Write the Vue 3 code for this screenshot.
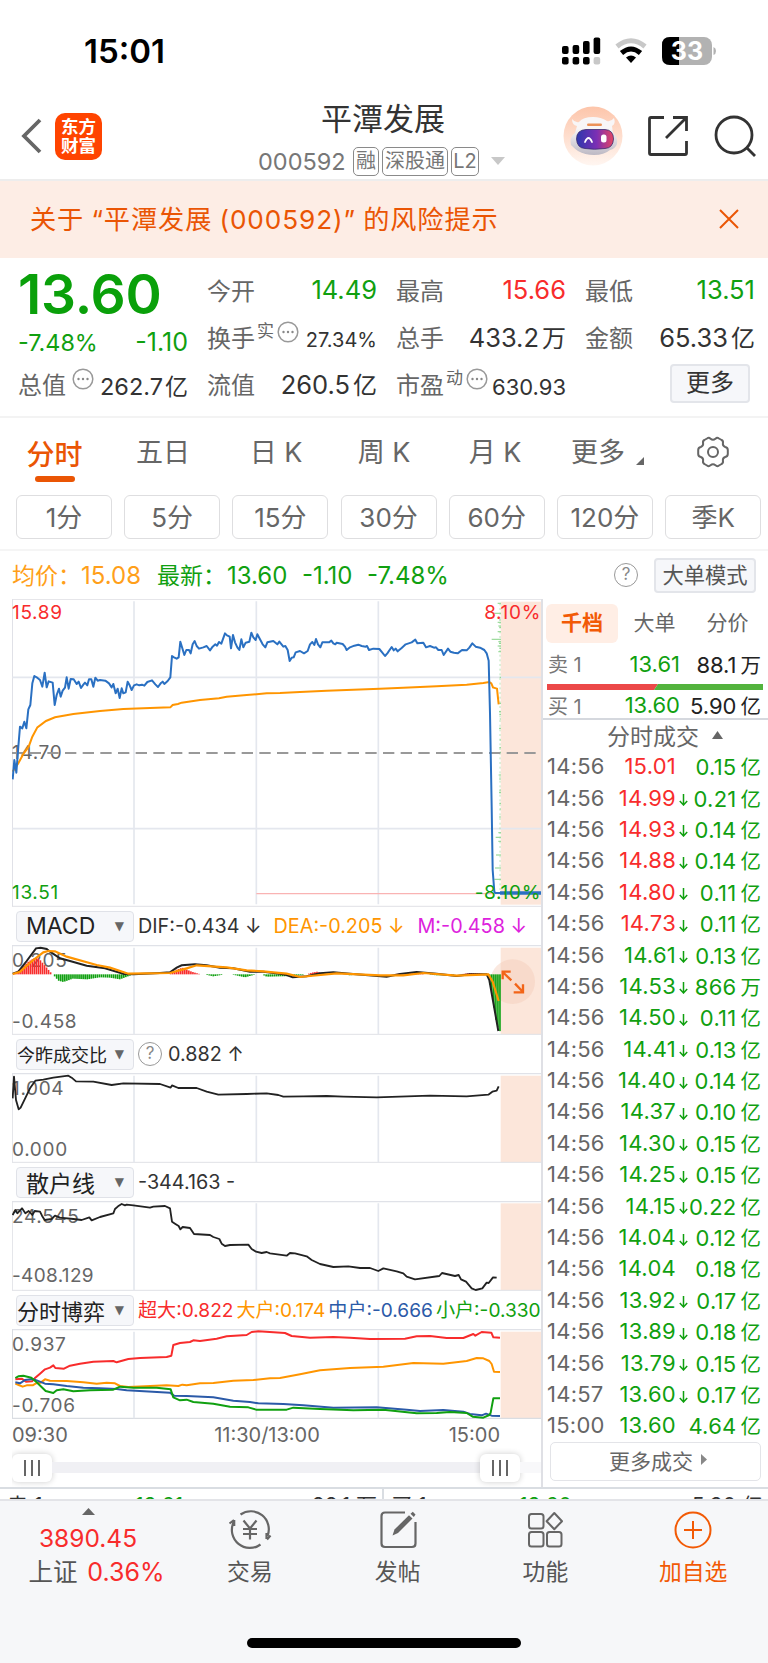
<script setup>
const stats = [
  { label: '今开', value: '14.49', tone: 'down' },
  { label: '最高', value: '15.66', tone: 'up' },
  { label: '最低', value: '13.51', tone: 'down' },
]

const tabs = ['五日', '日 K', '周 K', '月 K']
const periods = ['1分', '5分', '15分', '30分', '60分', '120分', '季K']

const trades = [
  ['14:56', '15.01', '', '0.15', '亿'],
  ['14:56', '14.99', '↓', '0.21', '亿'],
  ['14:56', '14.93', '↓', '0.14', '亿'],
  ['14:56', '14.88', '↓', '0.14', '亿'],
  ['14:56', '14.80', '↓', '0.11', '亿'],
  ['14:56', '14.73', '↓', '0.11', '亿'],
  ['14:56', '14.61', '↓', '0.13', '亿'],
  ['14:56', '14.53', '↓', '866', '万'],
  ['14:56', '14.50', '↓', '0.11', '亿'],
  ['14:56', '14.41', '↓', '0.13', '亿'],
  ['14:56', '14.40', '↓', '0.14', '亿'],
  ['14:56', '14.37', '↓', '0.10', '亿'],
  ['14:56', '14.30', '↓', '0.15', '亿'],
  ['14:56', '14.25', '↓', '0.15', '亿'],
  ['14:56', '14.15', '↓', '0.22', '亿'],
  ['14:56', '14.04', '↓', '0.12', '亿'],
  ['14:56', '14.04', '', '0.18', '亿'],
  ['14:56', '13.92', '↓', '0.17', '亿'],
  ['14:56', '13.89', '↓', '0.18', '亿'],
  ['14:56', '13.79', '↓', '0.15', '亿'],
  ['14:57', '13.60', '↓', '0.17', '亿'],
  ['15:00', '13.60', '', '4.64', '亿'],
]
const PREV_CLOSE = 14.7

const price =
  '38,568 43,510 49,548 55,470 60,410 67,415 73,395 79,415 85,358 91,345 97,280 103,258 110,262 120,270 127,290 134,248 140,292 146,274 158,278 164,345 170,315 177,296 182,320 188,302 195,293 200,262 206,296 212,267 221,268 230,282 236,275 243,294 250,284 255,278 262,286 267,268 274,268 280,290 286,263 293,272 300,270 316,272 327,280 335,292 340,282 347,310 353,296 359,324 365,295 370,310 377,307 383,275 389,286 395,300 402,286 410,283 418,286 426,284 433,287 442,276 456,271 466,283 474,291 482,280 488,275 493,282 503,273 511,262 516,198 522,202 530,206 536,202 541,155 547,175 553,195 559,180 567,180 572,190 578,163 584,153 590,168 597,176 610,172 620,168 630,181 638,170 646,163 651,167 657,156 664,161 675,130 681,136 689,140 693,175 699,135 705,157 712,172 718,180 724,148 730,172 737,158 748,155 754,128 760,142 767,150 772,133 780,148 788,163 796,172 802,157 820,153 832,163 838,155 850,170 856,168 863,180 869,213 875,203 881,202 887,187 900,183 912,190 923,183 930,163 937,156 943,165 948,147 954,163 961,172 967,157 987,157 994,152 1000,160 1006,163 1010,158 1028,162 1035,170 1040,180 1050,172 1063,167 1075,164 1085,168 1097,170 1101,168 1107,180 1120,176 1138,177 1147,188 1155,198 1162,190 1175,171 1181,181 1187,176 1193,184 1205,174 1217,163 1235,157 1246,149 1252,160 1270,158 1278,172 1290,168 1302,173 1308,172 1315,180 1325,180 1331,195 1344,176 1351,185 1362,188 1373,190 1386,180 1400,181 1408,173 1417,160 1427,170 1440,173 1453,180 1460,190 1466,212 1470,370 1475,650 1478,840 1483,905 1486,909 1500,909'
const average =
  '38,545 55,520 70,492 86,470 97,440 112,412 138,393 165,382 220,372 300,363 370,357 430,355 511,352 518,345 534,342 545,338 600,330 657,325 680,320 740,315 800,310 840,309 900,306 980,302 1140,296 1210,293 1310,289 1400,284 1450,279 1468,276 1474,280 1479,292 1491,296 1496,343'
const ticks = [
  [40, 10], [70, 24], [90, 6], [97, 10], [108, 8], [112, 5], [125, 10], [148, 28], [155, 8], [160, 6],
  [168, 10], [175, 5], [185, 8], [262, 4], [340, 5], [365, 6], [373, 5], [387, 4], [415, 6], [450, 4], [473, 5],
  [487, 4], [555, 7], [567, 6], [600, 5], [608, 6], [640, 5], [657, 4], [681, 6], [728, 8], [742, 16],
  [754, 8], [795, 15], [834, 18], [868, 20],
]

const dif =
  '38,206 55,200 80,168 108,130 122,128 140,132 150,140 180,160 210,168 260,182 315,190 372,207 400,208 480,204 510,202 530,188 545,181 585,178 620,181 660,188 700,190 750,200 790,200 840,206 860,210 878,217 920,214 960,205 1000,202 1050,206 1160,215 1200,207 1250,201 1310,206 1370,213 1410,208 1460,208 1468,225 1495,378'
const dea =
  '38,207 60,200 100,165 130,142 145,138 165,139 200,155 290,180 330,188 385,206 440,205 510,204 560,190 590,181 680,187 740,196 790,199 820,202 860,206 900,216 930,213 1010,205 1140,211 1210,211 1270,204 1370,212 1465,208 1478,230 1496,288'
const macdKnots = [
  [40, 0], [60, 15], [85, 38], [108, 52], [118, 46], [140, 20], [157, 0], [163, -5], [175, -19], [190, -23],
  [205, -18], [218, -13], [262, -15], [300, -9], [330, -10], [360, -15], [400, 0], [508, 0], [530, 14],
  [547, 20], [575, 8], [602, 0], [612, 0], [640, -6], [676, 0], [694, 0], [735, -9], [768, 0], [785, 0],
  [800, -7], [840, -6], [885, -5], [920, 0], [935, 5], [952, 8], [975, 0], [1030, 0], [1050, -3], [1080, 0],
  [1170, 0], [1210, 3], [1250, 3], [1280, 0], [1310, -3], [1350, -2], [1380, 0], [1410, 4], [1440, 3], [1456, 0],
  [1464, -8], [1474, -50], [1484, -115], [1491, -155], [1502, -174],
]
function heightAt(x) {
  const i = macdKnots.findIndex((k) => k[0] >= x)
  if (i <= 0) return 0
  const [x0, y0] = macdKnots[i - 1]
  const [x1, y1] = macdKnots[i]
  return y0 + ((x - x0) / (x1 - x0)) * (y1 - y0)
}
const macdBars = []
for (let x = 42; x <= 1500; x += 6.1) {
  const h = heightAt(x)
  if (Math.abs(h) > 1) macdBars.push({ x, y: h > 0 ? 208 - h : 208, h: Math.abs(h), fill: h > 0 ? '#f82c2c' : '#10a010' })
}

const ratio =
  '38,580 42,515 48,585 56,613 62,608 90,550 106,527 130,524 160,518 205,512 215,518 228,529 280,530 335,540 370,535 480,537 512,548 516,541 535,549 590,549 620,560 655,569 740,567 800,565 835,570 850,575 910,574 980,573 1030,575 1130,577 1290,572 1400,574 1465,569 1477,560 1490,557 1496,544'
const retail =
  '38,150 46,135 52,145 66,130 76,145 86,138 97,150 104,138 120,140 126,152 134,165 155,162 165,152 180,158 220,162 245,165 268,157 275,166 300,156 340,145 345,132 354,124 365,117 375,121 380,119 400,121 450,128 460,125 495,123 510,130 516,170 525,176 536,183 541,193 548,186 570,189 582,207 630,210 640,216 658,222 665,236 675,243 690,240 745,239 755,252 768,260 785,264 800,261 810,265 860,272 870,264 885,265 920,274 935,285 960,297 1000,306 1045,304 1080,309 1110,309 1135,318 1150,310 1190,319 1210,325 1220,335 1245,343 1318,333 1326,324 1365,333 1376,330 1383,343 1398,350 1415,370 1427,375 1447,370 1460,353 1466,354 1479,337 1490,338'
const flows = [
  { color: '#ff9500', points: '46,656 56,660 68,665 80,661 98,661 108,655 122,653 135,643 150,647 200,648 250,652 290,656 320,653 345,655 360,663 385,666 500,661 535,663 547,659 560,661 600,655 640,654 700,647 760,645 810,640 840,639 900,628 960,616 1050,609 1150,605 1240,594 1330,596 1400,588 1430,579 1450,580 1468,588 1475,597 1482,620 1500,621' },
  { color: '#f82c2c', points: '46,643 65,641 78,650 96,649 104,640 120,626 135,613 150,608 160,601 166,609 192,611 210,602 240,596 280,590 340,588 350,592 385,582 420,579 500,576 514,572 520,540 540,534 570,531 580,526 600,528 650,521 680,514 740,510 755,501 775,499 855,504 875,513 930,518 1000,516 1050,518 1110,522 1215,521 1250,514 1290,513 1340,519 1390,519 1420,507 1426,512 1445,501 1474,503 1480,517 1500,518' },
  { color: '#2b5aa8', points: '46,652 60,655 75,645 98,642 110,646 135,656 160,658 200,663 250,668 300,670 350,672 380,676 510,683 522,692 560,693 640,697 700,707 750,711 775,715 850,717 910,721 1000,728 1130,727 1220,734 1260,738 1330,735 1390,740 1410,747 1445,751 1458,746 1475,752 1500,753' },
  { color: '#10a010', points: '46,639 55,634 70,632 94,638 110,652 137,678 160,684 170,676 190,673 220,679 270,676 340,674 360,665 400,668 470,668 512,673 520,697 540,706 560,704 580,711 640,716 690,725 745,727 768,734 860,734 880,728 960,732 1060,736 1150,734 1250,745 1310,744 1350,741 1400,744 1418,755 1450,758 1468,750 1472,743 1480,700 1500,700' },
]
</script>

<template>
  <div class="page">
    <div class="status">
      <div class="clock">15:01</div>
      <svg class="status-icons" width="160" height="44" viewBox="556 31 160 44">
        <g fill="#000">
          <rect x="562" y="46" width="6.6" height="8" rx="2" />
          <rect x="572.6" y="45" width="6.6" height="9" rx="2" />
          <rect x="583" y="41" width="6.6" height="13" rx="2" />
          <rect x="593.6" y="37.500" width="6.600" height="16.500" rx="2" />
          <rect x="562" y="57" width="6.600" height="7.500" rx="2" />
          <rect x="572.600" y="57" width="6.600" height="7.500" rx="2" />
          <rect x="583" y="57" width="6.600" height="7.500" rx="2" />
        </g>
        <rect x="593.600" y="57" width="6.600" height="7.500" rx="2" fill="#c8c8c8" />
        <path d="M617 46.500 Q631 35 645 46.500" fill="none" stroke="#c8c8c8" stroke-width="5" />
        <path d="M621.500 53 Q631 45 640.500 53" fill="none" stroke="#000" stroke-width="5" />
        <path d="M626 57.500 Q631 53.500 636 57.500 L631 63 Z" />
        <rect x="662" y="37" width="50" height="28" rx="8" fill="#b2b2b2" />
        <path d="M670 37 H679 V65 H670 Q662 65 662 57 V45 Q662 37 670 37 Z" />
        <path d="M713.500 47 Q716 48 716 51 T713.500 55 Z" fill="#b2b2b2" />
        <text x="687" y="60" class="battery">33</text>
      </svg>
    </div>

    <header class="header">
      <div class="head-left">
        <svg width="22" height="36" viewBox="0 0 22 36"><path d="M20 2 L4 18 L20 34" fill="none" stroke="#666" stroke-width="3.800" /></svg>
        <div class="logo"><span>东方</span><span>财富</span></div>
      </div>
      <div class="head-mid">
        <div class="title">平潭发展</div>
        <div class="subtitle">
          <span class="code">000592</span>
          <span class="tag w1">融</span><span class="tag w3">深股通</span><span class="tag w2">L2</span>
          <svg class="drop" width="14" height="8" viewBox="0 0 14 8"><path d="M0 0H14L7 8Z" fill="#c8c8c8" /></svg>
        </div>
      </div>
      <div class="head-right">
        <svg width="60" height="60" viewBox="0 0 60 60">
          <defs>
            <linearGradient id="halo" x1="0" y1="0" x2="0" y2="1"><stop offset="0" stop-color="#fdc5aa" /><stop offset="1" stop-color="#fff6f1" /></linearGradient>
            <linearGradient id="visor" x1="0" y1="0" x2="1" y2="0"><stop offset="0" stop-color="#2e38ad" /><stop offset=".55" stop-color="#7c2fb4" /><stop offset="1" stop-color="#e64662" /></linearGradient>
            <linearGradient id="shell" x1="0" y1="0" x2="0" y2="1"><stop offset=".3" stop-color="#f8f6f7" /><stop offset="1" stop-color="#bdb9c4" /></linearGradient>
          </defs>
          <circle cx="30" cy="30" r="29.500" fill="url(#halo)" />
          <path d="M9 13 Q9 19 14 20 L12 27 Q6 31 8 39 Q12 43 15 45 Q22 49 31 49 Q41 49 47 44 Q52 43 54 38 Q55 31 50 27 L49 20 Q53 18 51 12 Q48 16 44 15 Q38 11 30 11 Q20 11 16 16 Q12 17 9 13Z" fill="url(#shell)" />
          <path d="M13.500 33Q13.500 24 23 23.500H42Q50.500 24 50.500 33Q50 42 42 42.500Q31 44 22 42.500Q14 42 13.500 33Z" fill="url(#visor)" stroke="#3b2c6e" stroke-width=".8" />
          <path d="M22 36 Q25.500 28 29 36" fill="none" stroke="#fff" stroke-width="1.800" stroke-linecap="round" />
          <rect x="38" y="28.500" width="5.500" height="8" rx="2.500" fill="#fff" />
          <rect x="24" y="17.500" width="15" height="2.500" rx="1.200" fill="#ec9258" />
        </svg>
        <svg width="42" height="42" viewBox="0 0 42 42" fill="none" stroke="#333" stroke-width="2.800">
          <path d="M17 2.500H4Q2.500 2.500 2.500 4V38Q2.500 39.500 4 39.500H38Q39.500 39.500 39.500 38V26M19 23L39 3M26 2.500H39.500V16" />
        </svg>
        <svg width="42" height="42" viewBox="0 0 42 42" fill="none" stroke="#333" stroke-width="2.800"><circle cx="20" cy="20" r="18" /><path d="M32.500 32.500L41 41" /></svg>
      </div>
    </header>

    <div class="banner">
      <span class="banner-text">关于 “平潭发展 (000592)” 的风险提示</span>
      <svg width="20" height="20" viewBox="0 0 20 20"><path d="M1 1L19 19M19 1L1 19" stroke="#ea5504" stroke-width="2" /></svg>
    </div>

    <section class="quote">
      <div class="big">13.60</div>
      <div v-for="s in stats" :key="s.label" class="cell">
        <span class="lab">{{ s.label }}</span><span class="val" :class="s.tone">{{ s.value }}</span>
      </div>
      <div class="cell change"><span>-7.48%</span><span class="diff">-1.10</span></div>
      <div class="cell">
        <span class="lab">换手<i>实</i><svg class="dots" width="22" height="22" viewBox="0 0 22 22"><circle cx="11" cy="11" r="9.800" fill="none" stroke="#999" stroke-width="1.500" /><g fill="#888"><circle cx="6.500" cy="11" r="1.200" /><circle cx="11" cy="11" r="1.200" /><circle cx="15.500" cy="11" r="1.200" /></g></svg></span>
        <span class="val s1">27.34%</span>
      </div>
      <div class="cell"><span class="lab">总手</span><span class="val">433.2<b>万</b></span></div>
      <div class="cell"><span class="lab">金额</span><span class="val">65.33<b>亿</b></span></div>
      <div class="cell">
        <span class="lab">总值<svg class="dots gap" width="22" height="22" viewBox="0 0 22 22"><circle cx="11" cy="11" r="9.800" fill="none" stroke="#999" stroke-width="1.500" /><g fill="#888"><circle cx="6.500" cy="11" r="1.200" /><circle cx="11" cy="11" r="1.200" /><circle cx="15.500" cy="11" r="1.200" /></g></svg></span>
        <span class="val s3">262.7<b>亿</b></span>
      </div>
      <div class="cell"><span class="lab">流值</span><span class="val">260.5<b>亿</b></span></div>
      <div class="cell">
        <span class="lab">市盈<i>动</i><svg class="dots" width="22" height="22" viewBox="0 0 22 22"><circle cx="11" cy="11" r="9.800" fill="none" stroke="#999" stroke-width="1.500" /><g fill="#888"><circle cx="6.500" cy="11" r="1.200" /><circle cx="11" cy="11" r="1.200" /><circle cx="15.500" cy="11" r="1.200" /></g></svg></span>
        <span class="val s2">630.93</span>
      </div>
      <div class="cell more-cell"><span class="more">更多</span></div>
    </section>

    <nav class="tabs">
      <span class="tab active">分时</span>
      <span v-for="t in tabs" :key="t" class="tab">{{ t }}</span>
      <span class="tab more-tab">更多<svg width="8" height="8" viewBox="0 0 8 8"><path d="M8 0V8H0Z" fill="#666" /></svg></span>
      <span class="tab gear">
        <svg width="34" height="34" viewBox="-17 -17 34 34" fill="none" stroke="#666" stroke-width="2" stroke-linejoin="round">
          <path d="M-6 -13.500Q-4 -15 -2.500 -13.200Q0 -11.200 2.500 -13.200Q4 -15 6 -13.500L8.600 -12Q10.500 -11 9.900 -8.800Q9.500 -6 12.200 -5Q14.800 -4.500 14.800 -2V2Q14.800 4.500 12.200 5Q9.500 6 9.900 8.800Q10.500 11 8.600 12L6 13.500Q4 15 2.500 13.200Q0 11.200 -2.500 13.200Q-4 15 -6 13.500L-8.600 12Q-10.500 11 -9.900 8.800Q-9.500 6 -12.200 5Q-14.800 4.500 -14.800 2V-2Q-14.800 -4.500 -12.200 -5Q-9.500 -6 -9.900 -8.800Q-10.500 -11 -8.600 -12Z" />
          <circle r="5" />
        </svg>
      </span>
    </nav>

    <div class="periods">
      <span v-for="p in periods" :key="p" class="period">{{ p }}</span>
    </div>

    <div class="legend">
      <span class="avg"><b>均价：</b>15.08</span>
      <span class="last"><b>最新：</b><em>13.60</em><em>-1.10</em><em>-7.48%</em></span>
      <span class="help">?</span>
      <span class="mode">大单模式</span>
    </div>

    <main class="board">
      <div class="charts">
        <svg width="530" height="308" viewBox="36 27 1590 924" class="chart">
          <rect x="1502" y="35" width="121" height="909" fill="#fce6da" />
          <path d="M36 28H1626M36 949H1626" stroke="#e6e6ea" stroke-width="4" />
          <path d="M37 28V949" stroke="#dadbe2" stroke-width="3" />
          <path d="M402 34V943M769 34V943M1135 34V943M37 262H1624M37 716H1624" stroke="#e4e7ee" stroke-width="5" />
          <path d="M1500 40V900" stroke="#9bdb9b" stroke-width="2" stroke-dasharray="6 8" />
          <path v-for="t in ticks" :key="t[0]" :d="`M${1503 - t[1]} ${t[0]}H1503`" stroke="#96d896" stroke-width="3.500" />
          <path d="M769 911H1502" stroke="#f9b3b3" stroke-width="4" />
          <text x="36" y="507" class="axis mid">14.70</text>
          <path d="M36 489H1620" stroke="#999" stroke-width="6" stroke-dasharray="34 19" />
          <text x="36" y="86" class="axis red">15.89</text>
          <polyline :points="average" fill="none" stroke="#ff9500" stroke-width="6" />
          <polyline :points="price" fill="none" stroke="#2a70c2" stroke-width="6" stroke-linejoin="round" />
          <path d="M1500 909H1624" stroke="#2a70c2" stroke-width="10" />
          <text x="36" y="928" class="axis green">13.51</text>
          <text x="1623" y="86" class="axis red end">8.10%</text>
          <text x="1623" y="928" class="axis green end">-8.10%</text>
        </svg>

        <div class="ind-row">
          <span class="select big-sel"><b>MACD</b><i class="caret">▼</i></span>
          <span class="ind-text">DIF:-0.434 ↓</span>
          <span class="ind-text orange dea">DEA:-0.205 ↓</span>
          <span class="ind-text purple m">M:-0.458 ↓</span>
        </div>
        <svg width="530" height="90" viewBox="36 120 1590 270" class="chart">
          <rect x="1502" y="128" width="121" height="260" fill="#fce6da" />
          <path d="M36 121H1626" stroke="#e0e2e8" stroke-width="5" />
          <path d="M36 388H1626M37 121V388" stroke="#e0e1e6" stroke-width="3" />
          <path d="M402 128V388M769 128V388M1135 128V388" stroke="#e4e7ee" stroke-width="5" />
          <circle cx="1538" cy="230" r="67" fill="#f5cdb8" fill-opacity=".45" />
          <text x="36" y="185" class="axis">0.205</text>
          <rect v-for="b in macdBars" :key="b.x" :x="b.x - 2.500" :y="b.y" width="5" :height="b.h" :fill="b.fill" />
          <polyline :points="dif" fill="none" stroke="#222" stroke-width="6" />
          <polyline :points="dea" fill="none" stroke="#ff9500" stroke-width="6.500" />
          <path d="M1534 226L1508 201M1508 223V200H1532M1545 236L1569 261M1569 238V262H1541" fill="none" stroke="#f26418" stroke-width="7" />
          <text x="36" y="368" class="axis">-0.458</text>
        </svg>

        <div class="ind-row">
          <span class="select sm-sel"><b>今昨成交比</b><i class="caret">▼</i></span>
          <span class="help sm">?</span>
          <span class="ind-text">0.882 ↑</span>
        </div>
        <svg width="530" height="90" viewBox="36 504 1590 270" class="chart">
          <rect x="1502" y="512" width="121" height="260" fill="#fce6da" />
          <path d="M36 505H1626" stroke="#e0e2e8" stroke-width="5" />
          <path d="M36 772H1626M37 505V772" stroke="#e0e1e6" stroke-width="3" />
          <path d="M402 512V772M769 512V772M1135 512V772" stroke="#e4e7ee" stroke-width="5" />
          <text x="36" y="569" class="axis">1.004</text>
          <polyline :points="ratio" fill="none" stroke="#222" stroke-width="5.500" stroke-linejoin="round" />
          <text x="36" y="752" class="axis">0.000</text>
        </svg>

        <div class="ind-row">
          <span class="select big-sel"><b>散户线</b><i class="caret">▼</i></span>
          <span class="ind-text">-344.163 -</span>
        </div>
        <svg width="530" height="90" viewBox="36 108 1590 270" class="chart">
          <rect x="1502" y="115" width="121" height="260" fill="#fce6da" />
          <path d="M36 109H1626" stroke="#e0e2e8" stroke-width="5" />
          <path d="M36 376H1626M37 109V376" stroke="#e0e1e6" stroke-width="3" />
          <path d="M402 115V376M769 115V376M1135 115V376" stroke="#e4e7ee" stroke-width="5" />
          <text x="36" y="173" class="axis">24.545</text>
          <polyline :points="retail" fill="none" stroke="#222" stroke-width="5.500" stroke-linejoin="round" />
          <text x="36" y="351" class="axis tight">-408.129</text>
        </svg>

        <div class="ind-row">
          <span class="select wide-sel"><b>分时博弈</b><i class="caret">▼</i></span>
          <span class="flow-legend"><span class="red">超大:0.822</span><span class="orange">大户:0.174</span><span class="blue">中户:-0.666</span><span class="green">小户:-0.330</span></span>
        </div>
        <svg width="530" height="90" viewBox="36 492 1590 270" class="chart">
          <rect x="1502" y="500" width="121" height="260" fill="#fce6da" />
          <path d="M36 493H1626" stroke="#e0e2e8" stroke-width="5" />
          <path d="M36 760H1626M37 493V760" stroke="#dadde2" stroke-width="4" />
          <path d="M402 500V760M769 500V760M1135 500V760" stroke="#e4e7ee" stroke-width="5" />
          <text x="36" y="557" class="axis">0.937</text>
          <text x="36" y="740" class="axis">-0.706</text>
          <polyline v-for="f in flows" :key="f.color" :points="f.points" fill="none" :stroke="f.color" stroke-width="6" stroke-linejoin="round" />
        </svg>

        <div class="times"><span>09:30</span><span>11:30/13:00</span><span>15:00</span></div>
        <div class="slider">
          <span class="knob"><i /><i /><i /></span>
          <span class="track" />
          <span class="knob"><i /><i /><i /></span>
          <span class="track tail" />
        </div>
      </div>

      <aside class="depth">
        <div class="depth-tabs"><span class="on">千档</span><span>大单</span><span>分价</span></div>
        <div class="level"><span class="lv">卖 1</span><span class="pr">13.61</span><span class="am">88.1<b>万</b></span></div>
        <svg class="ratio-bar" width="216" height="6" viewBox="0 0 216 6"><path d="M0 0H111L107 6H0Z" fill="#ec4848" /><path d="M111 0H216V6H107Z" fill="#53b33d" /></svg>
        <div class="level buy"><span class="lv">买 1</span><span class="pr">13.60</span><span class="am">5.90<b>亿</b></span></div>
        <div class="deal-title">分时成交<svg width="11" height="8" viewBox="0 0 11 8"><path d="M5.500 0L11 8H0Z" fill="#666" /></svg></div>
        <div v-for="(t, i) in trades" :key="i" class="trade">
          <span class="tm">{{ t[0] }}</span>
          <span class="tp" :class="+t[1] > PREV_CLOSE ? 'red' : 'green'">{{ t[1] }}</span>
          <span class="ta"><svg v-if="t[2]" width="9" height="12" viewBox="0 0 9 12"><path d="M4.500 0V11M.8 7L4.500 11L8.200 7" fill="none" stroke="#10a010" stroke-width="1.500" /></svg></span>
          <span class="tv">{{ t[3] }}<b>{{ t[4] }}</b></span>
        </div>
        <div class="more-deals">更多成交<svg width="6" height="11" viewBox="0 0 6 11"><path d="M0 0L6 5.500L0 11Z" fill="#888" /></svg></div>
      </aside>
    </main>

    <div class="peek">
      <div class="peek-half"><span>卖 1</span><span class="green">13.61</span><span>88.1 万</span></div>
      <div class="peek-half right"><span>买 1</span><span class="green">13.60</span><span>5.90 亿</span></div>
    </div>

    <footer class="bar">
      <div class="items">
        <div class="index">
          <svg width="13" height="7" viewBox="0 0 13 7"><path d="M6.500 0L13 7H0Z" fill="#666" /></svg>
          <span class="idx-val">3890.45</span>
          <span class="idx-row">上证 <em>0.36%</em></span>
        </div>
        <div class="item">
          <svg width="46" height="40" viewBox="-23 -20 46 40" fill="none" stroke="#666" stroke-width="2.200">
            <path d="M-9.500 -15.500A18 18 0 0 1 17.500 6M17 9.500L20.500 5.500M16.500 3V9M10.500 14.500A18 18 0 0 1 -16.500 -7.500M-16 -10L-20.500 -6.500M-15.800 -10V-4" />
            <path d="M-6.500 -9.500L0 -1.500L6.500 -9.500M0 -1.500V9.500M-7 -1H7M-7 4H7" />
          </svg>
          <span>交易</span>
        </div>
        <div class="item">
          <svg width="46" height="40" viewBox="-23 -20 46 40" fill="none" stroke="#666" stroke-width="2.200">
            <path d="M7 -17.500H-13Q-16.500 -17.500 -16.500 -14V13.500Q-16.500 17 -13 17H14Q17.500 17 17.500 13.500V-8" />
            <path d="M-5.500 5.500L-3.500 -.5L11 -14.800L14.500 -11.500L0 3Z" fill="#666" stroke="none" />
            <path d="M12.500 -16.300L14.800 -18.200L17.500 -15.500L15.800 -13Z" fill="#666" stroke="none" />
          </svg>
          <span>发帖</span>
        </div>
        <div class="item">
          <svg width="46" height="40" viewBox="-23 -20 46 40" fill="none" stroke="#666" stroke-width="2">
            <rect x="-16" y="-16" width="14.500" height="14.500" rx="2.500" />
            <rect x="-16" y="2" width="14.500" height="14.500" rx="2.500" />
            <rect x="2" y="2" width="14.500" height="14.500" rx="2.500" />
            <path d="M9.300 -17L17 -8.800L9.300 -.8L1.600 -8.800Z" stroke-linejoin="round" />
          </svg>
          <span>功能</span>
        </div>
        <div class="item add">
          <svg width="46" height="40" viewBox="-23 -20 46 40" fill="none" stroke="#f25a05" stroke-width="2"><circle r="17.500" /><path d="M-9 0H9M0 -9V9" /></svg>
          <span>加自选</span>
        </div>
      </div>
      <div class="home" />
    </footer>
  </div>
</template>

<style>
body {
  background: #fff;
}
</style>

<style scoped>
.page {
  width: 768px;
  height: 1663px;
  overflow: hidden;
  background: #fff;
  font-family: Inter, "Noto Sans CJK SC", sans-serif;
  color: #333;
  box-sizing: border-box;
  white-space: nowrap;
}
.page * {
  box-sizing: border-box;
}
i,
em {
  font-style: normal;
}
b {
  font-weight: inherit;
}
svg {
  display: block;
  flex: none;
}
.red { color: #f82c2c; }
.green { color: #10a010; }
.orange { color: #ff9500; }
.purple { color: #dd22dd; }
.blue { color: #2b5aa8; }

.status {
  height: 91px;
  display: flex;
  justify-content: space-between;
  padding: 31px 52px 0 84px;
}
.clock {
  font-size: 33px;
  font-weight: 600;
  line-height: 41px;
  color: #000;
}
.battery {
  font-size: 25px;
  font-weight: 700;
  fill: #fff;
  text-anchor: middle;
}

.header {
  height: 90px;
  border-bottom: 2px solid #ededed;
  display: grid;
  grid-template-columns: 258px 1fr 205px;
}
.head-left {
  display: flex;
  align-items: center;
  gap: 13px;
  padding: 2px 0 0 20px;
}
.logo {
  width: 47px;
  height: 47px;
  border-radius: 10px;
  background: #ff4400;
  color: #fff;
  font-size: 17.500px;
  font-weight: 700;
  line-height: 19.500px;
  display: flex;
  flex-direction: column;
  align-items: center;
  justify-content: center;
}
.title {
  font-size: 31px;
  line-height: 44px;
  padding: 6px 0 0 63px;
}
.subtitle {
  display: flex;
  align-items: center;
  height: 30px;
  margin-top: 5px;
  color: #777;
}
.code {
  font-size: 23.500px;
  width: 95px;
}
.tag {
  border: 1.500px solid #8a8a8a;
  border-radius: 5px;
  height: 29px;
  line-height: 26px;
  font-size: 20px;
  text-align: center;
  margin-right: 3px;
}
.w1 { width: 26px; }
.w2 { width: 28px; }
.w3 { width: 66px; }
.drop {
  margin-left: 9px;
}
.head-right {
  display: flex;
  align-items: center;
  padding-top: 1px;
}
.head-right svg:nth-child(2) { margin-left: 24px; }
.head-right svg:nth-child(3) { margin-left: 25px; }

.banner {
  height: 77px;
  background: #fdede5;
  color: #ea5504;
  display: flex;
  align-items: center;
  justify-content: space-between;
  padding: 0 29px 2px 30px;
}
.banner-text {
  font-size: 26.200px;
  letter-spacing: 0.900px;
  word-spacing: -1px;
  padding-bottom: 2px;
}

.quote {
  height: 160px;
  border-bottom: 2px solid #f3f3f3;
  display: grid;
  grid-template-columns: repeat(4, 170px);
  grid-template-rows: 47px 47px 47px;
  column-gap: 19px;
  padding: 8px 0 0 18px;
}
.big {
  font-size: 55px;
  font-weight: 600;
  line-height: 57px;
  letter-spacing: -0.200px;
  color: #0aa00a;
}
.cell {
  display: flex;
  align-items: center;
  justify-content: space-between;
  font-size: 24px;
}
.lab {
  color: #666;
  display: flex;
  align-items: center;
}
.lab i {
  font-size: 17px;
  margin: -14px 0 0 2px;
}
.dots {
  margin: -10px 0 0 3px;
}
.dots.gap { margin-left: 6px; }
.val { font-size: 25.500px; }
.val b { padding-left: 3px; font-size: 24px; }
.val.down { color: #10a010; }
.val.up { color: #f82c2c; }
.val.s1 { font-size: 20px; padding-top: 6px; }
.val.s2 { font-size: 22px; padding-top: 6px; }
.val.s3 { font-size: 23.500px; padding-top: 2px; }
.s3 b { font-size: 23px; padding-left: 2px; }
.change {
  color: #10a010;
  font-size: 23.400px;
  padding-top: 11px;
}
.diff {
  font-size: 25px;
}
.more-cell {
  justify-content: flex-end;
}
.more {
  width: 80px;
  height: 39px;
  margin-right: 5px;
  border: 2px solid #e3e5ea;
  border-radius: 4px;
  background: #f6f7fa;
  text-align: center;
  line-height: 33px;
}

.tabs {
  height: 77px;
  display: grid;
  grid-template-columns: 109px 108px 118px 98px 124px 101px 1fr;
  font-size: 27px;
  color: #666;
}
.tab {
  height: 68px;
  display: flex;
  align-items: center;
  justify-content: center;
  padding-bottom: 4px;
}
.tabs .gear { padding: 0 0 0 0; }
.active {
  color: #ea5504;
  font-size: 28px;
  font-weight: 500;
  height: 66px;
  flex-direction: column;
  padding: 13px 0 0 0;
}
.active::after {
  content: "";
  width: 40px;
  height: 6px;
  flex: none;
  border-radius: 3px;
  background: #ea5504;
  margin-top: 3px;
}
.more-tab svg {
  margin: 22px 0 0 11px;
}

.periods {
  height: 56px;
  border-bottom: 2px solid #f5f5f5;
  padding-left: 16px;
  display: flex;
  gap: 12.200px;
}
.period {
  width: 96px;
  height: 43.500px;
  border: 1.500px solid #dedee0;
  border-radius: 6px;
  text-align: center;
  font-size: 26px;
  line-height: 43px;
  color: #666;
  flex: none;
}

.legend {
  height: 48px;
  display: flex;
  align-items: center;
  padding: 0 12px 0 12px;
  font-size: 24px;
}
.legend b {
  font-size: 23px;
}
.avg {
  color: #ff9f1a;
  width: 145px;
  padding-bottom: 3px;
}
.last {
  color: #10a010;
  flex: 1;
  padding-bottom: 3px;
}
.last b {
  padding-right: 1px;
}
.last em {
  margin-right: 14.500px;
}
.help {
  width: 24px;
  height: 24px;
  border: 1.500px solid #999;
  border-radius: 50%;
  font-size: 17px;
  line-height: 21px;
  text-align: center;
  color: #888;
  margin-right: 16px;
}
.mode {
  width: 102px;
  height: 35px;
  border: 2px solid #e3e5ea;
  border-radius: 4px;
  background: #f6f7fa;
  color: #555;
  font-size: 21.300px;
  line-height: 30px;
  text-align: center;
}

.board {
  display: flex;
  height: 888px;
  margin-left: 12px;
}
.charts {
  width: 529px;
  overflow: hidden;
}
.axis {
  font-size: 57px;
  letter-spacing: 2px;
  fill: #666;
}
.axis.tight { letter-spacing: 1px; }
.axis.red { fill: #f82c2c; }
.axis.green { fill: #10a010; }
.axis.end { text-anchor: end; }

.ind-row {
  height: 38px;
  display: flex;
  align-items: center;
  padding-left: 4px;
}
.select {
  width: 118px;
  height: 31px;
  border: 1.500px solid #e0e2e8;
  border-radius: 4px;
  background: #f6f7fa;
  display: flex;
  align-items: center;
  justify-content: space-between;
  padding: 0 9px 1px 0;
  margin-right: 4px;
  color: #222;
  flex: none;
}
.select.big-sel { font-size: 23px; padding-left: 9px; }
.sm-sel { font-size: 18px; }
.wide-sel { font-size: 22px; }
.caret {
  font-family: "DejaVu Sans";
  font-size: 12px;
  color: #666;
}
.ind-text {
  font-size: 19.800px;
}
.dea { margin-left: 12px; }
.m { margin-left: 13px; }
.sm { margin-right: 6px; }
.flow-legend {
  display: flex;
  gap: 3px;
  font-size: 19.100px;
  padding-bottom: 3px;
}

.times {
  height: 33px;
  display: grid;
  grid-template-columns: 160px 190px 138px;
  align-items: center;
  font-size: 20px;
  color: #666;
  padding-bottom: 1px;
}
.times span:nth-child(2) { text-align: center; }
.times span:nth-child(3) { text-align: right; }
.slider {
  height: 31px;
  display: flex;
  align-items: center;
}
.knob {
  width: 40px;
  height: 28px;
  border-radius: 6px;
  background: #fff;
  box-shadow: 0 0 6px rgba(0, 0, 0, 0.2);
  display: flex;
  align-items: center;
  justify-content: center;
  gap: 5px;
  flex: none;
}
.knob i {
  width: 2px;
  height: 16px;
  background: #666;
}
.track {
  width: 428px;
  height: 11px;
  background: #f0f0f4;
  flex: none;
}
.tail {
  width: 21px;
  background: #f8f8fa;
}

.depth {
  width: 227px;
  border-left: 2px solid #dfe0e5;
  font-size: 22px;
}
.depth-tabs {
  height: 44px;
  padding: 5px 0 0 3px;
  display: grid;
  grid-template-columns: 72px 73px 73px;
  color: #666;
  text-align: center;
  line-height: 37px;
  font-size: 21px;
}
.on {
  background: #ffeee5;
  color: #f25a05;
  font-weight: 700;
  border-radius: 6px;
  height: 39px;
}
.level {
  height: 40px;
  display: grid;
  grid-template-columns: 50px 82px 81px;
  align-items: center;
  padding: 1px 0 0 5px;
}
.buy {
  height: 30px;
  padding: 0 0 1px 5px;
  border-bottom: 2px solid #d5d8de;
}
.lv { color: #777; font-size: 20px; }
.pr { color: #10a010; text-align: right; }
.am { text-align: right; color: #222; }
.level b,
.trade b { padding-left: 4px; font-size: 20.500px; letter-spacing: 0; }
.ratio-bar {
  margin: 1px 0 0 4px;
}
.deal-title {
  height: 31px;
  display: flex;
  align-items: center;
  padding: 0 0 1px 64px;
  font-size: 23px;
  color: #666;
  gap: 13px;
}
.trade {
  height: 31.400px;
  display: grid;
  grid-template-columns: 62px 67px 13px 72px;
  align-items: center;
  padding: 0 0 1px 4px;
  letter-spacing: 0.250px;
}
.tm { color: #666; }
.tp { text-align: right; }
.ta { padding: 5px 0 0 3px; }
.tv { color: #10a010; display: flex; justify-content: flex-end; align-items: baseline; }
.more-deals {
  width: 211px;
  height: 39px;
  margin: 0 0 0 7px;
  border: 1.500px solid #e3e4e8;
  border-radius: 5px;
  display: flex;
  align-items: center;
  padding: 0 0 3px 58px;
  gap: 8px;
  font-size: 21px;
  color: #666;
}

.peek {
  height: 12px;
  border-top: 2px solid #d9dde2;
  overflow: hidden;
  display: flex;
  font-size: 21px;
  line-height: 34px;
}
.peek-half {
  width: 382px;
  padding: 0 5px 0 7px;
  display: grid;
  grid-template-columns: 128px 100px 1fr;
}
.peek-half span:last-child { text-align: right; }
.right {
  width: 386px;
  border-left: 2px solid #d9dde2;
}

.bar {
  height: 165px;
  background: #f6f7f9;
  border-top: 2px solid #e3e4e8;
  color: #555;
}
.items {
  display: grid;
  grid-template-columns: 176px repeat(4, 147.750px);
  height: 137px;
}
.index {
  display: flex;
  flex-direction: column;
  align-items: center;
  padding-top: 7px;
  font-size: 24.500px;
}
.idx-val {
  color: #f82c2c;
  line-height: 30px;
  margin-top: 8px;
}
.idx-row {
  line-height: 34px;
  margin-top: 2px;
  padding-left: 17px;
}
.idx-row em {
  color: #f82c2c;
  margin-left: 3px;
  font-size: 25px;
}
.item {
  display: flex;
  flex-direction: column;
  align-items: center;
  padding-top: 9px;
  font-size: 22.800px;
}
.item span {
  line-height: 34px;
  margin-top: 5px;
}
.add { color: #f25a05; }
.home {
  width: 274px;
  height: 10px;
  border-radius: 5px;
  background: #000;
  margin-left: 247px;
}
</style>
